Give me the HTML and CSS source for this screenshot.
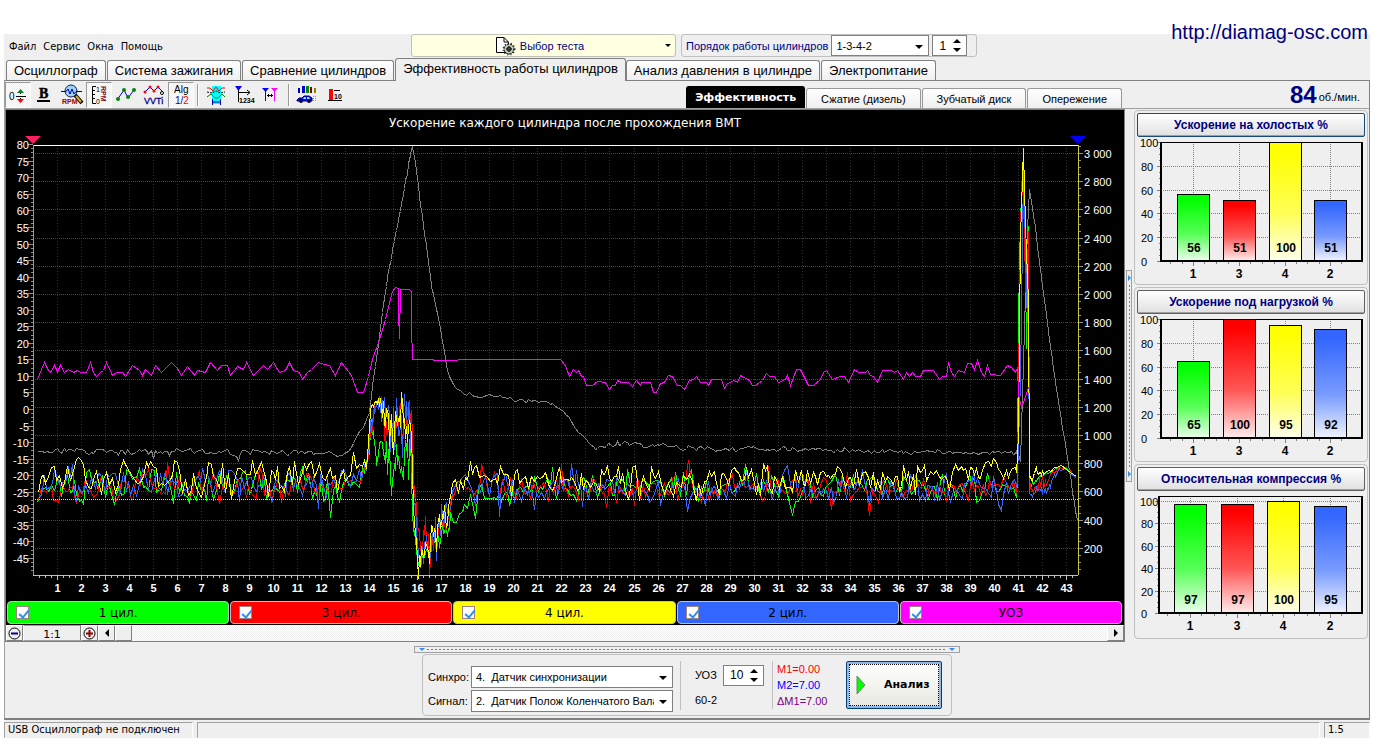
FILE: index.html
```html
<!DOCTYPE html>
<html lang="ru">
<head>
<meta charset="utf-8">
<title>Эффективность работы цилиндров</title>
<link rel="stylesheet" href="styles.css">
</head>
<body>
<a class="site-link" href="http://diamag-osc.com">http://diamag-osc.com</a>
<div class="app">
  <header class="top">
    <nav class="menu">
      <a href="#">Файл</a><a href="#">Сервис</a><a href="#">Окна</a><a href="#">Помощь</a>
    </nav>
    <button class="test-pick" type="button">
      <svg width="22" height="20" viewBox="0 0 22 20" aria-hidden="true">
        <path d="M1.500 1.500H9L13.500 6V16.500H1.500Z" fill="#fff" stroke="#000"/><path d="M9 1.500V6H13" fill="none" stroke="#000"/>
        <circle cx="14" cy="13" r="5" fill="#b9c9b0" stroke="#000" stroke-dasharray="2 1"/>
        <circle cx="14" cy="13" r="5.500" fill="none" stroke="#223" stroke-width="2" stroke-dasharray="1 2"/>
        <circle cx="14" cy="13" r="2" fill="#fff" stroke="#000"/><path d="M14 10V16M11 13H17" stroke="#000"/>
      </svg>
      <span>Выбор теста</span><i class="tri small"></i>
    </button>
    <div class="order">
      <label for="order">Порядок работы цилиндров</label>
      <span class="select order-select"><select id="order"><option>1-3-4-2</option></select><i class="tri"></i></span>
      <span class="spin order-spin"><input type="number" value="1" aria-label="Номер цилиндра"><i class="arrows"></i></span>
    </div>
  </header>

  <nav class="tabs">
    <button type="button">Осциллограф</button><button type="button">Система зажигания</button><button type="button">Сравнение цилиндров</button><button type="button" class="active">Эффективность работы цилиндров</button><button type="button">Анализ давления в цилиндре</button><button type="button">Электропитание</button>
  </nav>

  <main class="page">
    <div class="toolbar">
      <button type="button" class="tool pressed" aria-label="Ноль"><svg width="20" height="22" viewBox="0 0 20 22"><text x="1" y="16" font-size="10">0</text><path d="M8 12.500H18" stroke="#000" /><path d="M12.500 6V10M12.500 14V17" stroke="#000"/><path d="M9 9L12.500 5L16 9Z" fill="#0a7d1c"/><path d="M9 15L12.500 19L16 15Z" fill="#f00"/></svg></button>
      <button type="button" class="tool" aria-label="Жирные линии"><svg width="20" height="22" viewBox="0 0 20 22"><text class="serif" x="4" y="14" font-size="14" font-weight="bold" stroke="#000" stroke-width=".5">B</text><path d="M2 17H15" stroke="#000" stroke-width="2"/></svg></button>
      <button type="button" class="tool wide" aria-label="Масштаб RPM"><svg width="24" height="22" viewBox="0 0 24 22"><path d="M15 11L22 19" stroke="#000" stroke-width="4"/><path d="M16 12L21 18" stroke="#da3" stroke-width="2"/><circle cx="11" cy="7" r="6" fill="#9cd0f8" stroke="#124"/><path d="M1 7.500H6L8 5L10 10L12 5L14 10L16 7.500H22" fill="none" stroke="#00a"/><text x="2" y="20" font-size="7" font-weight="bold" fill="#900">RPM</text></svg></button>
      <button type="button" class="tool pressed" aria-label="Шкала RPM"><svg width="20" height="22" viewBox="0 0 20 22"><path d="M7 2.500H3.500V19.500H7M3 6.500H6M3 10.500H6M3 14.500H6" fill="none" stroke="#000"/><text x="7" y="8" font-size="7">1</text><text x="7" y="20" font-size="7">0</text><text transform="translate(12 2) rotate(90)" font-size="7" font-weight="bold" fill="#800">RPM</text></svg></button>
      <button type="button" class="tool wide" aria-label="Точки"><svg width="24" height="22" viewBox="0 0 24 22"><path d="M3 16L10 6L14 14L20 6" fill="none" stroke="#00c"/><g fill="#080"><circle cx="4" cy="15" r="2"/><circle cx="10" cy="6" r="2"/><circle cx="14" cy="13" r="2"/><circle cx="20" cy="6" r="2"/></g></svg></button>
      <button type="button" class="tool wide" aria-label="VVTi"><svg width="24" height="22" viewBox="0 0 24 22"><path d="M3 8L8 3L12 7L16 3L21 8" fill="none" stroke="#00c"/><g fill="#f00"><circle cx="3" cy="8" r="1.500"/><circle cx="8" cy="3" r="1.500"/><circle cx="12" cy="7" r="1.500"/><circle cx="16" cy="3" r="1.500"/></g><circle cx="20" cy="9" r="1.500" fill="#fff" stroke="#000"/><text x="2" y="20" font-size="9" fill="#008" stroke="#008" stroke-width=".3">VVTi</text></svg></button>
      <button type="button" class="tool pressed" aria-label="Алгоритм"><svg width="20" height="22" viewBox="0 0 20 22"><text x="3" y="9" font-size="10">Alg</text><text x="4" y="20" font-size="10" fill="#00a">1/<tspan fill="#f00">2</tspan></text></svg></button>
      <i class="rule"></i>
      <button type="button" class="tool wide" aria-label="Фазы"><svg width="24" height="22" viewBox="0 0 24 22"><path d="M8 2H17V20H8Z" fill="#0ff"/><path d="M3 4H6L9 7L12 3L15 7L18 4H21" fill="none" stroke="#f00"/><path d="M3 8L8 9L12 7L17 9L21 8" fill="none" stroke="#000" stroke-dasharray="2 1"/><path d="M3 13L7 10L11 14L14 14L18 10L21 13" fill="none" stroke="#080"/><path d="M8.500 15V21M16.500 15V21M9 18H16" stroke="#00a"/></svg></button>
      <button type="button" class="tool" aria-label="Порядок"><svg width="22" height="22" viewBox="0 0 22 22"><path d="M2 2H9L5.500 7Z" fill="#00f"/><path d="M5.500 6V18M6 8.500H17M14 6L17 8.500L14 11" fill="none" stroke="#000"/><text x="6" y="19" font-size="7" font-weight="bold">1234</text></svg></button>
      <button type="button" class="tool wide" aria-label="Между метками"><svg width="24" height="22" viewBox="0 0 24 22"><path d="M3 4H10L6.500 8Z" fill="#00f"/><path d="M12 4H19L15.500 8Z" fill="#f0f"/><path d="M6.500 7V17" stroke="#00f"/><path d="M15.500 7V17" stroke="#f0f"/><path d="M8 11.500H14M9.500 10V13M12.500 10V13" stroke="#000"/></svg></button>
      <i class="rule"></i>
      <button type="button" class="tool wide" aria-label="Отчёт"><svg width="24" height="22" viewBox="0 0 24 22"><g><path d="M3 4H5V9H3Z" fill="#00a"/><path d="M7 2H10V9H7Z" fill="#00d"/><path d="M11 2H14V9H11Z" fill="#080"/><path d="M15 3H17V9H15Z" fill="#800"/><path d="M19 4H21V9H19Z" fill="#880"/></g><path d="M2 16L4 14L7 14L9 12H14L17 14V17H2Z" fill="#00f" stroke="#006"/><path d="M9 13H11V15H8ZM12 13H14L15 15H12Z" fill="#5ff"/><circle cx="6" cy="17" r="2" fill="#004"/><circle cx="14" cy="17" r="2" fill="#004"/><path d="M18 12.500H22M18 14.500H22M18 16.500H22" stroke="#999" stroke-dasharray="1 1"/></svg></button>
      <button type="button" class="tool" aria-label="Уровень"><svg width="20" height="22" viewBox="0 0 20 22"><path d="M4 5H8V16H4Z" fill="#f00"/><path d="M3 16.500H17M9 6.500H15" stroke="#000"/><text x="9" y="15" font-size="7" font-weight="bold">10</text></svg></button>
      <nav class="subtabs">
        <button type="button" class="active">Эффективность</button><button type="button">Сжатие (дизель)</button><button type="button">Зубчатый диск</button><button type="button">Опережение</button>
      </nav>
      <p class="rpm"><strong>84</strong>об./мин.</p>
    </div>

    <div class="work">
      <section class="scope">
        <svg id="scope" class="scope-svg" role="img" aria-label="Ускорение каждого цилиндра после прохождения ВМТ"></svg>
        <div class="legend">
          <label class="green"><input type="checkbox" checked><span>1 цил.</span></label>
          <label class="red"><input type="checkbox" checked><span>3 цил.</span></label>
          <label class="yellow"><input type="checkbox" checked><span>4 цил.</span></label>
          <label class="blue"><input type="checkbox" checked><span>2 цил.</span></label>
          <label class="pink"><input type="checkbox" checked><span>УОЗ</span></label>
        </div>
        <div class="scroll">
          <button type="button" class="sq" aria-label="Уменьшить"><svg width="13" height="13" viewBox="0 0 13 13"><circle cx="6.500" cy="6.500" r="5.500" fill="none" stroke="#000"/><path d="M3 6.500H10" stroke="#008" stroke-width="2"/></svg></button>
          <output class="ratio">1:1</output>
          <button type="button" class="sq" aria-label="Увеличить"><svg width="13" height="13" viewBox="0 0 13 13"><circle cx="6.500" cy="6.500" r="5.500" fill="none" stroke="#000"/><path d="M3 6.500H10M6.500 3V10" stroke="#800" stroke-width="2"/></svg></button>
          <button type="button" class="sq" aria-label="Влево"><svg width="6" height="8" viewBox="0 0 6 8"><path d="M5 0V8L1 4Z"/></svg></button>
          <div class="track"><i class="thumb"></i></div>
          <button type="button" class="sq" aria-label="Вправо"><svg width="6" height="8" viewBox="0 0 6 8"><path d="M1 0V8L5 4Z"/></svg></button>
        </div>
      </section>
      <div class="vsplit"><i></i></div>
      <aside class="side">
        <section class="card"><button type="button" class="focus">Ускорение на холостых %</button><svg class="bars" data-values="56,51,100,51" data-top="100" data-left="24" data-y="5"></svg></section>
        <section class="card"><button type="button">Ускорение под нагрузкой %</button><svg class="bars" data-values="65,100,95,92" data-top="100" data-left="24" data-y="5"></svg></section>
        <section class="card"><button type="button">Относительная компрессия %</button><svg class="bars" data-values="97,97,100,95" data-top="104" data-left="22" data-y="5"></svg></section>
      </aside>
    </div>

    <div class="hsplit"><i></i></div>
    <section class="controls">
      <div class="signals">
        <label for="sync">Синхро:</label>
        <span class="select"><select id="sync"><option>4.&nbsp; Датчик синхронизации</option></select><i class="tri"></i></span>
        <label for="signal">Сигнал:</label>
        <span class="select"><select id="signal"><option>2.&nbsp; Датчик Полож Коленчатого Вала</option></select><i class="tri"></i></span>
      </div>
      <div class="angle">
        <label for="uoz">УОЗ</label>
        <span class="spin"><input id="uoz" type="number" value="10"><i class="arrows"></i></span>
        <span>60-2</span>
      </div>
      <div class="marks"><span class="m1">M1=0.00</span><span class="m2">M2=7.00</span><span class="dm">ΔM1=7.00</span></div>
      <button type="button" class="analyse"><svg width="10" height="20" viewBox="0 0 10 20" aria-hidden="true"><path d="M1 1V19L9 10Z" fill="#0f0" stroke="#6a8a6a"/></svg><span>Анализ</span></button>
    </section>
  </main>

  <footer class="status"><span>USB Осциллограф не подключен</span><span></span><span>1.5</span></footer>
</div>
<script src="charts.js"></script>
</body>
</html>
```
FILE: styles.css
```css
* { box-sizing: border-box; }
body { margin: 0; background: #fff; color: #000; font: 11px/16px "Liberation Sans", Arial, sans-serif; }
button, input, select { font: inherit; color: inherit; margin: 0; }
button { padding: 0; cursor: pointer; }
p { margin: 0; }
.site-link { position: absolute; top: 20px; right: 14px; font-size: 20px; line-height: 24px; color: #000080; text-decoration: none; }
.app { margin: 34px 12px 4px 4px; background: #efefef; }

.top { display: flex; height: 24px; align-items: flex-start; }
.menu { flex: 0 0 407px; display: flex; gap: 7px; padding: 5px; font: 11px/16px "DejaVu Sans Condensed", Tahoma, sans-serif; }
.menu a { color: #000; text-decoration: none; }
.test-pick { flex: 0 0 265px; height: 23px; display: flex; align-items: center; justify-content: center; gap: 3px; position: relative; padding-right: 8px; border: 1px solid #c0c0b4; border-radius: 3px; background: #ffffe1; color: #000080; }
.test-pick .tri { position: absolute; right: 4px; top: 9px; }
.tri { border: 4px solid transparent; border-top-color: #000; border-bottom: 0; }
.tri.small { border-width: 3px; border-bottom: 0; }
.order { display: flex; align-items: center; height: 23px; margin-left: 5px; padding: 0 9px 0 4px; border: 1px solid #c0c0c0; border-radius: 3px; color: #000080; }
.select, .spin { position: relative; display: flex; height: 22px; background: #fff; border: 1px solid #808080; color: #000; }
.select select { appearance: none; width: 100%; border: 0; background: none; padding: 0 18px 0 4px; outline: 0; }
.select .tri { position: absolute; right: 5px; top: 9px; pointer-events: none; }
.order-select { width: 98px; margin-left: 3px; }
.order-spin { margin-left: 3px; width: 35px; }
.order-select, .order-spin { height: 21px; }
.spin input { width: 100%; min-width: 0; border: 0; padding: 0 0 0 6px; background: none; appearance: textfield; outline: 0; font-size: 12px; }
.spin input::-webkit-inner-spin-button { display: none; }
.arrows::before, .arrows::after { content: ""; position: absolute; right: 5px; border: 4px solid transparent; }
.arrows::before { top: 3px; border-top: 0; border-bottom-color: #000; }
.arrows::after { bottom: 3px; border-bottom: 0; border-top-color: #000; }

.tabs { display: flex; align-items: flex-end; height: 22px; padding-left: 2px; font-size: 13px; }
.tabs button { height: 20px; padding: 0 7px; margin-right: 1px; border: 1px solid #808080; border-bottom: 0; border-radius: 3px 3px 0 0; background: linear-gradient(#fff, #efefef); white-space: nowrap; }
.tabs .active { height: 23px; margin: 0 0 -1px; padding: 0 7px 3px; border-color: #808080; background: #efefef; z-index: 1; }

.page { border: 1px solid #808080; border-bottom-width: 2px; border-left-color: #a0a0a0; padding-bottom: 2px; }
.toolbar { display: flex; align-items: center; height: 28px; border-bottom: 1px solid #a0a0a0; }
.tool { width: 27px; height: 26px; display: grid; place-items: center; border: 1px solid transparent; background: none; }
.tool.wide { width: 28px; }
.tool.pressed { width: 26px; border-color: #999 #fff #fff #999; background: repeating-conic-gradient(#fff 0 25%, #efefef 0 50%) 0 0 / 2px 2px; }
.rule { width: 2px; height: 22px; margin: 0 3px; border-left: 1px solid #999; border-right: 1px solid #fff; }
.subtabs { align-self: flex-end; display: flex; align-items: flex-end; margin-left: auto; }
.subtabs button { height: 20px; min-width: 93px; padding: 0 14px; margin-left: 1px; border: 1px solid #999; border-bottom: 0; border-radius: 3px 3px 0 0; background: linear-gradient(#fff, #efefef); }
.subtabs .active { height: 22px; padding: 0 8px; background: #000; border-color: #000; color: #fff; font: bold 11px/16px "DejaVu Sans", sans-serif; }
.rpm { flex: 0 0 247px; padding-right: 9px; text-align: right; white-space: nowrap; }
.rpm strong { font-size: 24px; line-height: 26px; color: #000080; margin-right: 2px; vertical-align: -2px; }

.work { display: flex; }
.scope { flex: 1; min-width: 0; border: 1px solid #808080; background: #000; }
.scope-svg { display: block; width: 100%; height: 491px; }
.legend { display: grid; grid-template-columns: repeat(5, 1fr); gap: 1px; padding: 0 2px 1px 1px; }
.legend label { position: relative; height: 23px; display: grid; place-items: center; border: 1px solid #c0c0c0; border-radius: 4px; font: 12px/18px "DejaVu Sans", sans-serif; }
.legend input { appearance: none; position: absolute; left: 8px; top: 4px; width: 13px; height: 13px; background: #fff; border: 1px solid #a08080; }
.legend input:checked::after { content: ""; position: absolute; left: 4px; top: 1px; width: 4px; height: 8px; border: solid #3090f0; border-width: 0 2px 2px 0; transform: rotate(40deg); }
.green { background: #0f0; }
.red { background: #f00; }
.yellow { background: #ff0; }
.blue { background: #36f; }
.pink { background: #f0f; }
.scroll { display: flex; height: 16px; background: #efefef; }
.sq { width: 17px; height: 16px; display: grid; place-items: center; background: #efefef; border: 1px solid; border-color: #fff #808080 #808080 #fff; }
.ratio { width: 58px; text-align: center; font: 11px/17px "DejaVu Sans", sans-serif; border: 1px solid; border-color: #a0a0a0 #808080 #a0a0a0 #fff; }
.track { flex: 1; background: repeating-conic-gradient(#fff 0 25%, #efefef 0 50%) 0 0 / 2px 2px; }
.thumb { display: block; width: 17px; height: 16px; background: #efefef; border: 1px solid; border-color: #fff #808080 #808080 #fff; }
.vsplit { width: 8px; padding: 0 1px; display: flex; align-items: center; }
.vsplit i { width: 7px; height: 212px; position: relative; padding: 14px 0; border: 1px solid #a0a0a0; background: linear-gradient(#3090f0 50%, transparent 0) 2px 0 / 1px 4px repeat-y content-box; }
.vsplit i::before, .vsplit i::after { content: ""; position: absolute; left: 1px; border: 3px solid transparent; border-left-color: #3090f0; border-right: 0; }
.vsplit i::before { top: 4px; }
.vsplit i::after { bottom: 4px; }
.side { flex: 0 0 236px; display: flex; flex-direction: column; gap: 2px; padding: 1px 1px 0; }
.card { height: 175px; padding: 2px; border: 1px solid #c0c0c0; border-radius: 4px; }
.card button { display: block; width: 100%; height: 24px; border: 1px solid #606060; border-radius: 2px; background: linear-gradient(#fff, #e0e0e0); box-shadow: inset 0 -1px #a0a0a0; color: #000080; font-size: 12px; font-weight: bold; }
.card .focus { border-color: #1a4a78; }
.bars { display: block; width: 100%; height: 146px; }

.hsplit { display: flex; justify-content: center; padding-top: 4px; }
.hsplit i { position: relative; width: 546px; height: 7px; padding: 0 12px; border: 1px solid #a0a0a0; background: linear-gradient(90deg, #3090f0 50%, transparent 0) 0 2px / 4px 1px repeat-x content-box; }
.hsplit i::before, .hsplit i::after { content: ""; position: absolute; top: 1px; border: 3px solid transparent; border-top-color: #3090f0; border-bottom: 0; }
.hsplit i::before { left: 4px; }
.hsplit i::after { right: 4px; }
.controls { display: flex; align-items: center; width: 530px; height: 62px; margin: 1px auto 0; padding: 0 9px 0 5px; border: 1px solid #c0c0c0; border-radius: 4px; }
.signals { display: grid; grid-template-columns: 40px 202px; gap: 2px 3px; align-items: center; padding-top: 8px; white-space: nowrap; }
.angle { display: grid; grid-template-columns: 26px 41px; gap: 6px 2px; align-items: center; margin-left: 7px; padding: 4px 8px 2px 14px; border-left: 1px solid #c0c0c0; }
.angle .spin { height: 21px; }
.marks { display: flex; flex-direction: column; width: 66px; padding-left: 4px; border-left: 1px solid #c0c0c0; }
.m1 { color: #f00; }
.m2 { color: #00f; }
.dm { color: #800080; }
.analyse { display: flex; align-items: center; gap: 18px; width: 96px; height: 48px; margin-left: auto; padding-left: 9px; border: 1px solid #003c74; border-radius: 2px; background: linear-gradient(#fff, #e8e8e0); box-shadow: inset 0 0 0 2px #90b8e8; outline: 1px dotted #000; outline-offset: -4px; font: bold 11px/16px "DejaVu Sans", sans-serif; }

.status { display: grid; grid-template-columns: 189px 1fr 46px; gap: 4px; padding-top: 2px; font: 11px/14px "DejaVu Sans Condensed", Tahoma, sans-serif; }
.status span { height: 16px; padding: 0 3px; border: solid; border-width: 1px; border-color: #a0a0a0 #fff #efefef #a0a0a0; white-space: nowrap; }
.scope-svg text, .bars text, .tool text { font-family: "Liberation Sans", Arial, sans-serif; }
.tool .serif { font-family: "Liberation Serif", serif; }
.scope-svg .title { font-family: "DejaVu Sans", sans-serif; font-size: 12px; }
```
FILE: charts.js
```javascript
const esc = (x1, y1, x2, y2, stroke, extra = '') =>
  `<line x1="${x1}" y1="${y1}" x2="${x2}" y2="${y2}" stroke="${stroke}" ${extra}/>`;
const pairs = s => s.trim().split(/\s+/).map(p => p.split(',').map(Number));

function random(seed) {
  let a = seed;
  return () => {
    a = (a * 1664525 + 1013904223) >>> 0;
    return a / 4294967296;
  };
}

// Advance angle samples: time, level
const advance = pairs(`37,380 41,370 44,363 48,371 50,373 54,366 57,372 60,366 64,373 68,370 73,373 77,371 80,373 86,373 90,363 93,373 96,377 100,373 103,371 106,363 112,376 116,373 122,373 125,377 132,366 139,371 142,376 145,370 151,376 155,366 161,373 171,363 177,369 181,376 187,367 194,376 197,371 205,373 210,363 217,371 221,366 227,366 230,376 237,367 243,370 246,363 253,376 263,366 267,370 273,363 279,373 285,371 289,363 293,371 299,373 302,380 307,373 311,370 318,363 324,365 329,366 335,376 341,363 351,376 357,393 363,393 368,377 372,360 379,340 385,320 392,292 395,288 398,289 398,314 399,339 400,290 409,290 411,292 411,325 412,360 430,360 436,361 480,360 560,360 565,366 569,377 573,370 576,373 578,371 581,377 583,377 586,386 592,386 597,382 605,383 609,390 612,386 615,386 617,381 621,383 628,383 632,387 636,381 640,386 641,383 650,383 653,393 656,393 660,384 664,383 668,376 672,377 677,386 680,386 684,390 689,381 693,380 696,377 700,383 706,383 708,386 711,380 721,380 724,389 727,384 734,381 737,383 740,376 749,381 752,386 755,386 762,381 766,374 769,377 774,377 778,383 785,380 787,376 790,386 796,370 800,370 808,386 813,386 820,380 823,373 826,371 832,380 840,377 844,377 848,383 854,370 858,373 865,373 867,371 870,376 873,377 877,383 882,371 891,371 894,373 897,371 903,380 906,373 909,377 912,373 915,377 920,377 923,371 933,371 939,380 942,377 946,377 948,363 951,373 954,377 958,371 964,373 967,364 971,364 974,370 977,361 981,373 984,377 987,366 990,375 1000,376 1007,366 1011,368 1015,373 1017,368 1018,395 1021,408 1024,400 1028,388 1029,388`);

// Envelopes: time, centre level, spread
const speed = pairs(`37,452,4 335,453,4 341,456,1 350,450,1 357,435,1 363,427,1 369,412,2 373,380,1 378,345,1 385,290,3 394,240,3 400,210,5 405,185,6 411,152,6 412,147,1 416,172,5 420,205,4 425,240,2 431,285,2 440,330,1 447,370,1 450,380,1 457,390,1 465,395,2 480,396,2 500,396,2 510,401,2 535,401,2 550,404,2 560,410,1 567,416,1 572,425,1 580,435,1 588,443,1 594,449,1 609,444,3 650,446,4 700,449,3 800,450,3 900,453,2 1015,453,3 1018,456,2 1020,462,1 1021,430,1 1024,330,4 1027,230,4 1029,190,1 1034,220,4 1043,295,4 1053,370,3 1064,440,2 1072,490,3 1077,520,3`);
const spike = {
  g: '1016,493,8 1017,480,3 1018,320,1 1020,220,10 1023,170,9 1026,340,20 1028,230,10 1029,490,2 1035,482,6 1045,474,3 1058,469,1 1066,469,1 1076,478,0',
  r: '1016,490,8 1017,480,3 1019,300,5 1021,183,3 1024,230,30 1026,320,20 1028,234,3 1029,480,5 1031,492,6 1043,486,8 1058,468,2 1066,468,1 1076,478,0',
  b: '1016,488,8 1017,482,3 1020,380,5 1023,172,3 1025,240,20 1027,330,20 1028,300,5 1029,498,3 1036,492,6 1046,492,6 1058,471,1 1066,470,1 1076,479,0',
  y: '1016,475,8 1018,430,3 1020,240,5 1023,148,1 1024,190,3 1026,270,25 1028,280,20 1029,480,5 1035,475,7 1045,473,2 1060,466,1 1076,477,0'
};
const cylinders = [
  ['#00ff00', 7, pairs(`37,502,4 42,488,19 350,487,19 366,475,14 371,425,9 377,460,15 383,440,15 390,480,40 400,465,40 410,470,34 412,520,10 417,560,9 430,550,8 447,530,12 452,505,16 490,500,15 550,490,15 700,487,16 1010,490,16 ${spike.g}`)],
  ['#ff0000', 19, pairs(`37,505,4 42,489,17 350,487,16 366,470,10 371,425,20 376,404,20 390,428,32 400,430,28 411,415,25 413,480,10 418,545,26 432,535,24 446,525,12 453,492,15 500,486,20 700,489,20 1010,490,15 ${spike.r}`)],
  ['#3366ff', 43, pairs(`40,500,4 45,483,19 350,482,17 366,470,12 371,425,25 377,400,22 390,430,40 400,430,40 411,430,34 413,500,10 418,558,18 432,540,24 446,515,22 453,485,15 500,488,20 700,490,18 1010,488,18 ${spike.b}`)],
  ['#ffff00', 88, pairs(`38,495,4 43,480,19 350,475,19 366,462,8 371,404,5 377,403,5 390,430,34 400,425,36 411,415,30 413,510,10 418,562,18 430,540,22 447,515,14 453,485,10 490,475,13 550,478,15 700,478,20 1010,474,15 ${spike.y}`)]
];

function trace(env, seed) {
  const rnd = random(seed);
  const pts = [];
  let k = 0;
  let wave = 0;
  for (let t = env[0][0]; t <= env[env.length - 1][0];) {
    while (k < env.length - 2 && env[k + 1][0] <= t) k++;
    const a = env[k], b = env[k + 1], f = Math.min(1, (t - a[0]) / (b[0] - a[0]));
    const target = (rnd() + rnd() - 1) * (rnd() > 0.88 ? 2 : 1.100);
    wave = wave * 0.2 + target * 0.95;
    pts.push([t, a[1] + (b[1] - a[1]) * f + wave * (a[2] + (b[2] - a[2]) * f)]);
    const busy = (t > 366 && t < 450) || t > 1014;
    t += busy ? 1 : rnd() > 0.5 ? 3 : 2;
  }
  return pts;
}

function drawScope() {
  const svg = document.getElementById('scope');
  const width = svg.clientWidth, L = 27, R = width - 46, T = 35, B = 465;
  const sx = v => Math.round(L + (v - 33) * (R - L) / 1045) + 0.5;
  const sy = v => Math.round(v) - 111 + 0.5;
  let s = `<text class="title" x="${width / 2}" y="17" fill="#fff" text-anchor="middle">Ускорение каждого цилиндра после прохождения ВМТ</text>`;
  s += '<g shape-rendering="crispEdges">';
  for (let n = 1; n <= 43; n++) s += esc(sx(33 + n * 24.02), T, sx(33 + n * 24.02), B, '#333', 'stroke-dasharray="1 2"');
  for (let v = 200; v <= 3000; v += 200) s += esc(L, sy(577 - v * 0.141), R, sy(577 - v * 0.141), '#484848', 'stroke-dasharray="1 1"');
  const line = (pts, color) => `<polyline fill="none" stroke="${color}" points="${pts.map(p => sx(p[0]) + ',' + sy(p[1])).join(' ')}"/>`;
  s += line(trace(speed, 5), '#808080');
  cylinders.forEach(c => { s += line(trace(c[2], c[1]), c[0]); });
  s += line(advance, '#ff00ff');
  s += esc(L, sy(500), R, sy(500), '#80ffff', 'stroke-dasharray="1 1"');
  s += esc(L, T + .5, R, T + .5, '#fff') + esc(L, B + .5, R, B + .5, '#c0c0c0');
  s += esc(L + .5, T, L + .5, B, '#40c890') + esc(R + .5, T, R + .5, B, '#c8c840');
  for (let v = 80; v > -50; v -= 1.25) s += esc(v % 5 ? L - 2 : L - 5, sy(410 - v * 3.31), L, sy(410 - v * 3.31), '#909090');
  for (let v = 50; v <= 3050; v += 50) s += esc(R + 1, sy(577 - v * 0.141), v % 200 ? R + 3 : R + 5, sy(577 - v * 0.141), '#909090');
  for (let n = 1; n < 174; n++) s += esc(sx(33 + n * 6.005), B, sx(33 + n * 6.005), n % 4 ? B + 3 : B + 5, '#c0c0c0');
  s += '</g><g fill="#fff" font-size="11">';
  for (let v = 80; v >= -45; v -= 5) s += `<text x="${L - 4}" y="${sy(414 - v * 3.31)}" text-anchor="end">${v}</text>`;
  for (let v = 200; v <= 3000; v += 200) {
    const label = v >= 1000 ? Math.floor(v / 1000) + ' ' + String(v % 1000).padStart(3, '0') : v;
    s += `<text x="${R + 6}" y="${sy(581 - v * 0.141)}">${label}</text>`;
  }
  s += '</g><g fill="#fff" font-size="11" font-weight="bold" text-anchor="middle">';
  for (let n = 1; n <= 43; n++) s += `<text x="${sx(33 + n * 24.02)}" y="${B + 17}">${n}</text>`;
  s += '</g>';
  s += `<path d="M${L - 8} 26H${L + 8}L${L} 34Z" fill="#ff2060"/><path d="M${R - 8} 26H${R + 8}L${R} 34Z" fill="#00f"/>`;
  svg.innerHTML = s;
}

function drawBars(svg, index) {
  const d = svg.dataset, values = d.values.split(',').map(Number), max = +d.top;
  const L = +d.left, R = svg.clientWidth - 3, T = +d.y, B = max > 100 ? T + 117 : T + 119;
  const y = v => Math.round(B - v * (B - T) / max) + 0.5;
  const colors = ['#00ff00', '#ff0000', '#ffff00', '#3366ff'], names = [1, 3, 4, 2];
  const step = (R - L) * (max > 100 ? 0.23 : 0.227), first = L + (R - L) * (max > 100 ? 0.153 : 0.161);
  let s = '<defs>' + colors.map((c, i) => `<linearGradient id="bar${index}${i}" x2="0" y2="1"><stop offset=".08" stop-color="${c}"/><stop offset=".6" stop-color="${c}" stop-opacity=".66"/><stop offset="1" stop-color="${c}" stop-opacity=".08"/></linearGradient>`).join('') + '</defs><g shape-rendering="crispEdges">';
  for (let v = 0; v <= 100; v += 5) s += esc(v % 20 ? L - 2 : L - 4, y(v), L, y(v), '#808080');
  for (let v = 20; v <= 100; v += 20) s += esc(L, y(v), R, y(v), '#808080', 'stroke-dasharray="1 1"');
  values.forEach((v, i) => {
    const x = Math.round(first + i * step);
    s += esc(x + .5, T, x + .5, B, '#808080', 'stroke-dasharray="1 1"');
    [-23, -11, 0, 11].forEach(o => { s += esc(x + o + .5, B, x + o + .5, o ? B + 3 : B + 5, '#808080'); });
  });
  s += esc(L, T + .5, R, T + .5, '#000') + esc(L, T, L, B, '#000', 'stroke-width="2"');
  s += esc(R, T, R, B, '#000', 'stroke-width="2"') + esc(L - 1, B, R + 1, B, '#000', 'stroke-width="2"');
  values.forEach((v, i) => {
    const x = Math.round(first + i * step), box = `x="${x - 15.5}" y="${y(v)}" width="32" height="${B - y(v) - .5}"`;
    s += `<rect ${box} fill="#fff"/><rect ${box} fill="url(#bar${index}${i})" stroke="#000"/>`;
  });
  s += '</g><g font-size="11">';
  for (let v = 0; v <= 100; v += 20) s += `<text x="${v === 100 ? 3 : 4}" y="${y(v) + 4}">${v}</text>`;
  s += '</g><g font-size="12" font-weight="bold" text-anchor="middle">';
  values.forEach((v, i) => {
    const x = Math.round(first + i * step);
    s += `<text x="${x + 1}" y="${B - 9}">${v}</text><text x="${x}" y="${B + 17}">${names[i]}</text>`;
  });
  svg.innerHTML = s + '</g>';
}

function draw() {
  drawScope();
  document.querySelectorAll('.bars').forEach(drawBars);
}
draw();
window.addEventListener('resize', draw);
```
